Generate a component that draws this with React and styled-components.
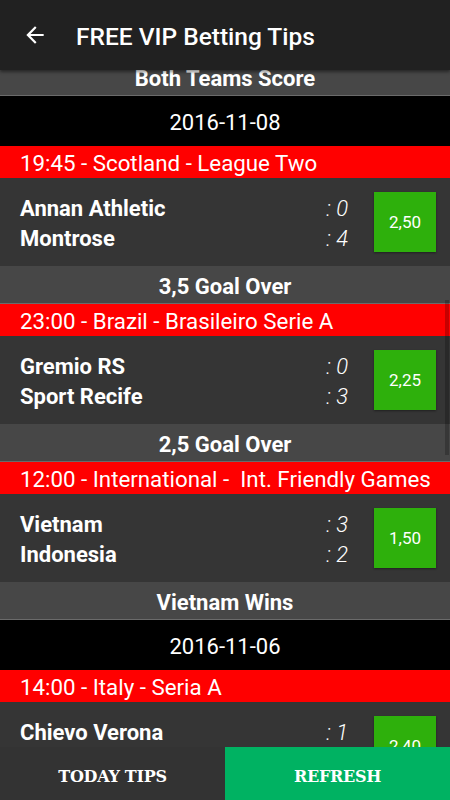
import React from 'react';
import styled, { createGlobalStyle } from 'styled-components';

const Global = createGlobalStyle`
  html, body { margin: 0; padding: 0; background: #353535; }
  body { font-family: Roboto, "Liberation Sans", sans-serif; }
`;

const Screen = styled.div`
  position: relative;
  width: 450px;
  height: 800px;
  overflow: hidden;
  display: flex;
  flex-direction: column;
  background: #353535;
`;

const Toolbar = styled.header`
  height: 70px;
  flex: 0 0 70px;
  background: #212121;
  display: flex;
  align-items: center;
  color: #fff;
  position: relative;
  z-index: 2;
  box-shadow: 0 2px 3px rgba(0,0,0,0.45);
`;

const Back = styled.button`
  width: 48px;
  height: 48px;
  margin-left: 11px;
  padding: 0;
  border: 0;
  background: none;
  display: flex;
  align-items: center;
  justify-content: center;
`;

const Title = styled.h1`
  margin: 2px 0 0 17px;
  font-size: 24.5px;
  font-weight: 500;
`;

const List = styled.div`
  flex: 1;
  overflow: hidden;
  position: relative;
`;

const Scroller = styled.div`
  margin-top: -12px;
`;

const TipBar = styled.div`
  height: 37px;
  box-sizing: border-box;
  padding-top: 3px;
  background: #474747;
  border-bottom: 1px solid #6b6b6b;
  color: #fff;
  font-size: 22px;
  font-weight: 700;
  display: flex;
  align-items: center;
  justify-content: center;
  box-sizing: content-box;
  height: 34px;
`;

const DateBar = styled.div`
  height: 47px;
  padding-top: 3px;
  background: #000;
  color: #fff;
  font-size: 22px;
  display: flex;
  align-items: center;
  justify-content: center;
`;

const League = styled.div`
  height: 31px;
  padding: 1px 0 0 20px;
  background: #ff0000;
  color: #fff;
  font-size: 22.3px;
  display: flex;
  align-items: center;
  white-space: pre;
`;

const MatchRow = styled.div`
  height: 88px;
  display: flex;
  align-items: center;
  padding: 0 14px 0 20px;
  color: #fff;
`;

const Teams = styled.div`
  flex: 1;
  display: grid;
  grid-template-columns: 1fr auto;
  margin-top: 4px;
`;

const Team = styled.div`
  font-size: 22px;
  font-weight: 700;
  line-height: 30px;
`;

const Score = styled.div`
  font-size: 22px;
  font-style: italic;
  font-weight: 300;
  line-height: 30px;
  text-align: right;
`;

const Odds = styled.div`
  width: 62px;
  height: 60px;
  margin-left: 26px;
  background: #2eb00c;
  box-shadow: 0 1px 2px rgba(0,0,0,0.4);
  font-size: 17px;
  display: flex;
  align-items: center;
  justify-content: center;
`;

const ScrollThumb = styled.div`
  position: absolute;
  right: 1px;
  top: 230px;
  width: 4px;
  height: 155px;
  background: rgba(0,0,0,0.22);
`;

const BottomNav = styled.nav`
  position: absolute;
  left: 0;
  right: 0;
  bottom: 0;
  height: 53px;
  display: flex;
  z-index: 3;
`;

const NavButton = styled.div`
  flex: 1;
  background: ${p => (p.active ? '#00b262' : '#333333')};
  color: #fff;
  font-family: "DejaVu Serif", "Liberation Serif", serif;
  font-weight: 700;
  font-size: 16px;
  letter-spacing: -0.3px;
  display: flex;
  align-items: center;
  justify-content: center;
  padding-top: 5px;
`;

const ArrowIcon = () => (
  <svg width="26" height="26" viewBox="0 0 24 24" fill="#fff">
    <path d="M20 11H7.83l5.59-5.59L12 4l-8 8 8 8 1.41-1.41L7.83 13H20v-2z" />
  </svg>
);

const items = [
  { tip: 'Both Teams Score' },
  { date: '2016-11-08' },
  { league: '19:45 - Scotland - League Two', home: 'Annan Athletic', away: 'Montrose', hs: '0', as: '4', odds: '2,50' },
  { tip: '3,5 Goal Over' },
  { league: '23:00 - Brazil - Brasileiro Serie A', home: 'Gremio RS', away: 'Sport Recife', hs: '0', as: '3', odds: '2,25' },
  { tip: '2,5 Goal Over' },
  { league: '12:00 - International -  Int. Friendly Games', home: 'Vietnam', away: 'Indonesia', hs: '3', as: '2', odds: '1,50' },
  { tip: 'Vietnam Wins' },
  { date: '2016-11-06' },
  { league: '14:00 - Italy - Seria A', home: 'Chievo Verona', away: 'Sassuolo', hs: '1', as: '1', odds: '2,40' },
];

function Match({ m }) {
  return (
    <>
      <League>{m.league}</League>
      <MatchRow>
        <Teams>
          <Team>{m.home}</Team>
          <Score>: {m.hs}</Score>
          <Team>{m.away}</Team>
          <Score>: {m.as}</Score>
        </Teams>
        <Odds>{m.odds}</Odds>
      </MatchRow>
    </>
  );
}

export default function App() {
  return (
    <Screen>
      <Global />
      <Toolbar>
        <Back><ArrowIcon /></Back>
        <Title>FREE VIP Betting Tips</Title>
      </Toolbar>
      <List>
        <Scroller>
          {items.map((it, i) => {
            if (it.tip) return <TipBar key={i}>{it.tip}</TipBar>;
            if (it.date) return <DateBar key={i}>{it.date}</DateBar>;
            return <Match key={i} m={it} />;
          })}
        </Scroller>
        <ScrollThumb />
      </List>
      <BottomNav>
        <NavButton>TODAY TIPS</NavButton>
        <NavButton active>REFRESH</NavButton>
      </BottomNav>
    </Screen>
  );
}
